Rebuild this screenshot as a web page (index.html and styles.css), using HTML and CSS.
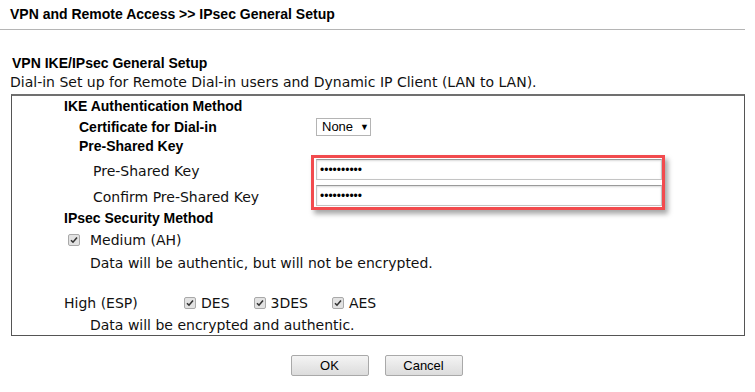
FILE: index.html
```html
<!DOCTYPE html>
<html>
  <head>
    <meta charset="UTF-8">
    <title>IPsec General Setup</title>
    <link rel="stylesheet" href="styles.css">
  </head>
  <body>
    <div class="page">
      <div class="title">VPN and Remote Access &gt;&gt; IPsec General Setup</div>
      <div class="section-title">VPN IKE/IPsec General Setup</div>
      <div class="desc">Dial-in Set up for Remote Dial-in users and Dynamic IP Client (LAN to LAN).</div>
      <div class="box">
        <div class="row r1"><span class="head">IKE Authentication Method</span></div>
        <div class="row r2">
          <span class="label sub">Certificate for Dial-in</span>
          <span class="select">None <span class="arrow">&#9660;</span></span>
        </div>
        <div class="row r3"><span class="label sub">Pre-Shared Key</span></div>
        <div class="keys">
          <div class="key-labels">
            <div class="key-label">Pre-Shared Key</div>
            <div class="key-label">Confirm Pre-Shared Key</div>
          </div>
          <div class="mark">
            <input class="pass" type="password" value="1234567890">
            <input class="pass" type="password" value="1234567890">
          </div>
        </div>
        <div class="row r6"><span class="head">IPsec Security Method</span></div>
        <div class="row r7">
          <span class="chk"><svg width="12" height="12" viewBox="0 0 12 12"><rect x="0.5" y="0.5" width="11" height="11" rx="1.5" fill="#e2e2e2" stroke="#a9a9a9"/><path d="M3 6.2 L5 8.2 L9 3.6" fill="none" stroke="#333" stroke-width="1.6"/></svg></span>
          <span class="txt">Medium (AH)</span>
        </div>
        <div class="row r8"><span class="txt note">Data will be authentic, but will not be encrypted.</span></div>
        <div class="row r9">
          <span class="txt high">High (ESP)</span>
          <span class="opt"><span class="chk"><svg width="12" height="12" viewBox="0 0 12 12"><rect x="0.5" y="0.5" width="11" height="11" rx="1.5" fill="#e2e2e2" stroke="#a9a9a9"/><path d="M3 6.2 L5 8.2 L9 3.6" fill="none" stroke="#333" stroke-width="1.6"/></svg></span><span class="txt">DES</span></span>
          <span class="opt"><span class="chk"><svg width="12" height="12" viewBox="0 0 12 12"><rect x="0.5" y="0.5" width="11" height="11" rx="1.5" fill="#e2e2e2" stroke="#a9a9a9"/><path d="M3 6.2 L5 8.2 L9 3.6" fill="none" stroke="#333" stroke-width="1.6"/></svg></span><span class="txt">3DES</span></span>
          <span class="opt"><span class="chk"><svg width="12" height="12" viewBox="0 0 12 12"><rect x="0.5" y="0.5" width="11" height="11" rx="1.5" fill="#e2e2e2" stroke="#a9a9a9"/><path d="M3 6.2 L5 8.2 L9 3.6" fill="none" stroke="#333" stroke-width="1.6"/></svg></span><span class="txt">AES</span></span>
        </div>
        <div class="row r10"><span class="txt note">Data will be encrypted and authentic.</span></div>
      </div>
      <div class="buttons">
        <button class="btn">OK</button>
        <button class="btn">Cancel</button>
      </div>
    </div>
  </body>
</html>
```

FILE: styles.css
```css
body{
    margin:0;
    background:#fff;
    color:#000;
    font-family:"Liberation Sans", Arial, sans-serif;
    font-size:14px;
}
.page{
    width:745px;
}
.title{
    height:29px;
    line-height:28px;
    padding-left:10px;
    font-weight:bold;
    border-bottom:1px solid #b5b5b5;
}
.section-title{
    margin-top:24px;
    padding-left:12px;
    line-height:18px;
    font-weight:bold;
}
.desc{
    padding-left:10px;
    line-height:20px;
    font-family:"DejaVu Sans", Verdana, sans-serif;
    font-size:14px;
    color:#111;
}
.box{
    margin:2px 0 0 11px;
    width:732px;
    border:1px solid #555;
    border-top:2px solid #707070;
}
.row{
    display:flex;
    align-items:center;
}
.r1{height:20px;}
.r2{height:21px;}
.r3{height:18px;}
.r6{height:16px;}
.r7{height:28px;}
.r8{height:18px;}
.r9{height:22px; margin-top:20px;}
.r10{height:21px;}
.head{
    padding-left:52px;
    font-weight:bold;
}
.label{
    box-sizing:border-box;
    width:304px;
}
.sub{
    padding-left:67px;
    font-weight:bold;
}
.select{
    display:inline-flex;
    align-items:center;
    box-sizing:border-box;
    width:55px;
    height:18px;
    padding-left:5px;
    border:1px solid #b4b4b4;
    background:#fff;
    font-size:13px;
}
.arrow{
    margin-left:7px;
    font-size:9px;
}
.keys{
    display:flex;
    height:55px;
}
.key-labels{
    box-sizing:border-box;
    width:299px;
    padding:3px 0 0 81px;
}
.key-label{
    height:26px;
    line-height:26px;
    font-family:"DejaVu Sans", Verdana, sans-serif;
    font-size:14px;
    color:#111;
}
.mark{
    display:flex;
    flex-direction:column;
    gap:5px;
    box-sizing:border-box;
    width:354px;
    padding:1px 0 0 2px;
    border:3px solid #f24b4e;
    box-shadow:3px 4px 5px rgba(0,0,0,0.35);
}
.pass{
    box-sizing:border-box;
    width:346px;
    height:21px;
    margin:0;
    padding:0 3px;
    border:1px solid #c4c4c4;
    border-top-color:#9a9a9a;
    box-shadow:inset 0 1px 2px rgba(0,0,0,0.15);
    font-family:"Liberation Sans", Arial, sans-serif;
    font-size:12px;
    outline:none;
}
.chk{
    display:inline-flex;
    width:12px;
    height:12px;
}
.r7 .chk{
    margin-left:56px;
    margin-right:10px;
}
.txt{
    font-family:"DejaVu Sans", Verdana, sans-serif;
    font-size:14px;
    color:#111;
}
.note{
    padding-left:78px;
}
.high{
    box-sizing:border-box;
    width:172px;
    padding-left:52px;
}
.opt{
    display:inline-flex;
    align-items:center;
}
.opt .chk{
    margin-right:5px;
}
.opt + .opt{
    margin-left:24px;
}
.buttons{
    display:flex;
    justify-content:center;
    gap:16px;
    margin-top:19px;
    padding-left:8px;
}
.btn{
    width:78px;
    height:21px;
    padding:0;
    border:1px solid #a9a9a9;
    border-radius:2px;
    background:linear-gradient(#f4f4f4, #dcdcdc);
    font-family:"Liberation Sans", Arial, sans-serif;
    font-size:13px;
    color:#000;
}
```
